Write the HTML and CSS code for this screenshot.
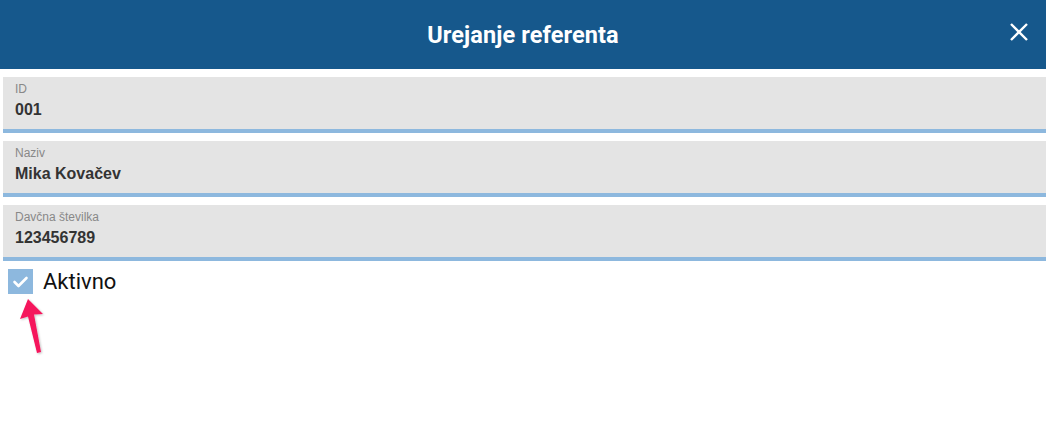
FILE: index.html
```html
<!DOCTYPE html>
<html lang="sl">
<head>
<meta charset="utf-8">
<title>Urejanje referenta</title>
<link rel="stylesheet" href="styles.css">
</head>
<body>
<header class="bar">
  <h1 class="title">Urejanje referenta</h1>
  <button class="close" aria-label="Zapri">
    <svg width="20" height="20" viewBox="0 0 20 20"><path d="M2 2 L18 18 M18 2 L2 18" stroke="#fff" stroke-width="2.4" fill="none"/></svg>
  </button>
</header>
<main class="form">
  <div class="field">
    <div class="label">ID</div>
    <div class="value">001</div>
  </div>
  <div class="field">
    <div class="label">Naziv</div>
    <div class="value">Mika Kovačev</div>
  </div>
  <div class="field">
    <div class="label">Davčna številka</div>
    <div class="value">123456789</div>
  </div>
  <div class="check-row">
    <span class="box">
      <svg width="25" height="25" viewBox="0 0 25 25"><path d="M6.5 13 L10.5 17 L18.5 9" stroke="#fff" stroke-width="2.6" fill="none" stroke-linecap="round" stroke-linejoin="round"/></svg>
    </span>
    <span class="check-label">Aktivno</span>
    <svg class="arrow" width="40" height="70" viewBox="0 0 40 70">
      <defs><filter id="sh" x="-50%" y="-50%" width="200%" height="200%"><feDropShadow dx="1" dy="1" stdDeviation="1" flood-color="#000" flood-opacity="0.25"/></filter></defs>
      <g filter="url(#sh)" fill="#f5135c">
        <polygon points="17,4 9,24 17,21.5 26,58 30,57 23,19.5 32,19"/>
      </g>
    </svg>
  </div>
</main>
</body>
</html>
```
FILE: styles.css
```css
* { box-sizing: border-box; }
html, body { margin: 0; padding: 0; background: #fff; }
body { font-family: Roboto, "Liberation Sans", Arial, sans-serif; color: #333; width: 1046px; height: 444px; overflow: hidden; }
.bar {
  height: 69px;
  background: #16588c;
  display: flex;
  align-items: center;
  justify-content: center;
  position: relative;
}
.title {
  margin: 0;
  color: #fff;
  font-size: 23.5px;
  font-weight: 700;
  letter-spacing: 0.1px;
}
.close {
  position: absolute;
  right: 17px;
  top: 22px;
  width: 20px;
  height: 20px;
  padding: 0;
  border: 0;
  background: none;
  display: flex;
}
.form {
  padding: 8px 0 0 3px;
  display: flex;
  flex-direction: column;
  gap: 8px;
}
.field {
  height: 56px;
  background: #e4e4e4;
  border-bottom: 4px solid #8db8de;
  padding: 5px 12px 0;
  font-family: "Liberation Sans", Arial, sans-serif;
}
.label {
  font-size: 12px;
  color: #888;
  line-height: 14px;
}
.value {
  margin-top: 4px;
  font-size: 16px;
  font-weight: 700;
  color: #333;
  line-height: 19px;
}
.check-row {
  position: relative;
  display: flex;
  align-items: center;
  gap: 10px;
  padding-left: 5px;
  height: 25px;
}
.box {
  width: 25px;
  height: 25px;
  background: #8db8de;
  display: flex;
}
.check-label {
  font-size: 22px;
  color: #111;
}
.arrow {
  position: absolute;
  left: 8px;
  top: 26px;
}
```
